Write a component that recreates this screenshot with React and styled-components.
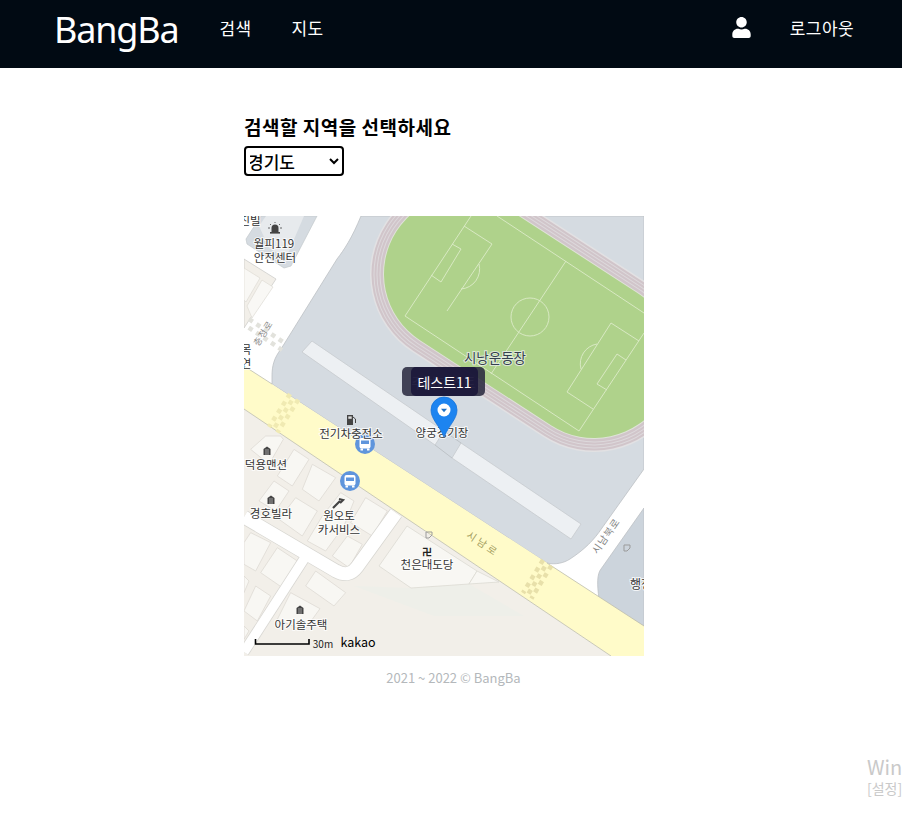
import React from "react";
import styled, { createGlobalStyle } from "styled-components";
import { FaUser } from "react-icons/fa";

const GlobalStyle = createGlobalStyle`
  html, body {
    margin: 0;
    padding: 0;
    background: #fff;
    font-family: "Noto Sans CJK KR", "Noto Sans", sans-serif;
  }
`;

const Page = styled.div`
  min-height: 817px;
  position: relative;
  overflow: hidden;
`;

const Header = styled.header`
  height: 68px;
  background: #010a13;
  color: #fff;
  display: flex;
  align-items: center;
  padding: 0 48px 13px 54px;
  box-sizing: border-box;
`;

const Brand = styled.a`
  font-family: "Noto Sans", sans-serif;
  font-size: 36px;
  line-height: 1;
  letter-spacing: -1.2px;
  margin: 5px 41px 0 0;
`;

const NavLink = styled.a`
  font-size: 17px;
  line-height: 1;
  letter-spacing: 0.4px;
  margin-right: ${(p) => p.$gap || 0}px;
`;

const Spacer = styled.div`
  flex: 1;
`;

const UserIcon = styled(FaUser)`
  width: 19px;
  height: 21px;
  margin-right: 39px;
`;

const Main = styled.main`
  width: 400px;
  margin-left: 244px;
  padding-top: 46px;
`;

const Title = styled.h2`
  margin: 0;
  font-size: 19px;
  line-height: 26px;
  letter-spacing: 0.5px;
  font-weight: 700;
  color: #000;
`;

const RegionSelect = styled.select`
  display: block;
  width: 100px;
  height: 30px;
  margin-top: 6px;
  border: 2px solid #000;
  border-radius: 4px;
  background: #fff;
  color: #000;
  font-family: inherit;
  font-size: 17px;
  font-weight: 500;
  padding: 0 2px 0 0;
  text-indent: -2px;
`;

const MapBox = styled.div`
  position: relative;
  width: 400px;
  height: 440px;
  margin-top: 40px;
  overflow: hidden;
`;

const MapSvg = styled.svg`
  display: block;
  width: 400px;
  height: 440px;
`;

const Bubble = styled.div`
  position: absolute;
  top: 151px;
  height: 29px;
  border-radius: 5px;
  box-sizing: border-box;
  display: flex;
  align-items: center;
  justify-content: center;
  color: #fff;
  font-size: 14px;
  white-space: nowrap;
  overflow: hidden;
`;

const BackBubble = styled(Bubble)`
  left: 158px;
  width: 83px;
  background: rgba(38, 38, 60, 0.85);
  color: rgba(255, 255, 255, 0.75);
`;

const FrontBubble = styled(Bubble)`
  left: 167px;
  width: 67px;
  background: rgba(28, 24, 58, 0.94);
`;

const Pin = styled.svg`
  position: absolute;
  left: 186px;
  top: 180px;
  width: 28px;
  height: 42px;
`;

const Footer = styled.footer`
  width: 902px;
  margin-left: -244px;
  padding: 13px 0 0 5px;
  box-sizing: border-box;
  text-align: center;
  font-size: 13px;
  line-height: 17px;
  color: #b4b8bb;
`;

const Watermark = styled.div`
  position: absolute;
  left: 867px;
  top: 753px;
  color: #c9c9c9;
  white-space: nowrap;
`;

const WatermarkTitle = styled.div`
  font-size: 20px;
  line-height: 27px;
`;

const WatermarkSub = styled.div`
  font-size: 14px;
  line-height: 17px;
`;

const Label = styled.text`
  font-family: "Noto Sans CJK KR", sans-serif;
  font-size: ${(p) => p.$size || 11.5}px;
  font-weight: ${(p) => p.$weight || 400};
  fill: ${(p) => p.$color || "#333"};
  text-anchor: middle;
  paint-order: stroke;
  stroke: ${(p) => p.$halo || "rgba(255,255,255,0.8)"};
  stroke-width: ${(p) => (p.$halo === "none" ? 0 : 2)}px;
`;

// 지도에 쓰는 건물들 (zoom 좌표 기준 / 3)
const buildings = [
  "150,40 195,70 145,150 100,120",
  "205,85 275,125 225,195 175,160",
  "90,135 135,165 95,225 45,195",
  "155,185 220,225 175,300 105,250",
  "290,170 330,195 300,270 245,345 190,315 235,240",
  "365,185 430,225 385,300 320,260",
  "310,300 355,325 315,395 265,360",
  "20,290 80,320 35,405 0,385 0,320",
  "100,335 160,375 115,455 50,410",
  "35,450 80,480 40,555 0,525",
  "215,405 305,470 270,510 185,450",
  "140,470 228,518 180,585 100,550",
  "0,570 15,585 0,610",
  "0,420 15,435 0,470",
  "20,40 65,0 110,0 118,10 75,85",
];

const pitchLines = [
  "M227 0L161 100L335 215L400 117",
  "M253 0L400 97",
  "M322 45L247 158",
  "M220 10L248 28L203 95",
  "M208 28L217 33L197 66L187 59",
  "M367 107L395 125M367 107L323 176L349 193",
  "M373 138L382 144M373 138L353 168L363 174",
  "M235 48A20 20 0 0 1 217 73",
  "M353 128A20 20 0 0 0 337 153",
];

const trackLayers = [
  [186, "#e2e1e3"],
  [183, "#d1c5ca"],
  [179, "#ddd9dc"],
  [177, "#d1c5ca"],
  [173, "#ddd9dc"],
  [171, "#d1c5ca"],
  [167, "#ddd9dc"],
  [165, "#d1c5ca"],
  [160, "#dfe3d8"],
  [158, "#afd28b"],
];

// 횡단보도: 줄마다 점선 시작을 어긋나게 그린다
const Crosswalk = ({ x1, y1, x2, y2, dx, dy, rows, color }) => (
  <g stroke={color} strokeWidth="4.5" strokeDasharray="4.5 4.5">
    {Array.from({ length: rows }, (_, i) => (
      <line
        key={i}
        x1={x1 + dx * i}
        y1={y1 + dy * i}
        x2={x2 + dx * i}
        y2={y2 + dy * i}
        strokeDashoffset={i % 2 ? 4.5 : 0}
      />
    ))}
  </g>
);

const BusStop = ({ x, y }) => (
  <g transform={`translate(${x} ${y})`}>
    <circle r="10" fill="#5f95dc" />
    <rect x="-5.5" y="-6" width="11" height="10.5" rx="2" fill="#fff" />
    <rect x="-4" y="-3.5" width="8" height="3.5" fill="#5f95dc" />
    <rect x="-4.5" y="4.5" width="2.5" height="2" fill="#fff" />
    <rect x="2" y="4.5" width="2.5" height="2" fill="#fff" />
  </g>
);

const HouseIcon = ({ x, y }) => (
  <g transform={`translate(${x} ${y})`} fill="#444">
    <path d="M-3.5 4V-2L0 -4.5L3.5 -2V4Z" />
    <path d="M-2 -1H2M-2 1H2M-2 3H2" stroke="#ddd" strokeWidth="0.6" />
  </g>
);

const SignIcon = ({ x, y }) => (
  <path
    transform={`translate(${x} ${y})`}
    d="M-3 -3H3V0L0 3H-3Z"
    fill="none"
    stroke="#9b9b9b"
    strokeWidth="1"
  />
);

function KakaoMap() {
  return (
    <MapSvg viewBox="0 0 400 440">
      <rect width="400" height="440" fill="#fff" />

      {/* 아래쪽 땅 */}
      <polygon points="0,193 367,440 0,440" fill="#f2efe9" />
      <polygon points="0,43 32,63 0,112" fill="#f2efe9" stroke="#c9c9c5" strokeWidth="0.7" />
      <polygon points="0,52 16,62 2,86 0,84" fill="#f9f8f5" stroke="#dedbd4" strokeWidth="0.7" />
      <polygon points="18,64 29,71 8,102 3,90" fill="#f9f8f5" stroke="#dedbd4" strokeWidth="0.7" />

      {/* 소방서 블록 */}
      <polygon points="2,23 17,0 73,0 47,50 40,52 3,28" fill="#d5dbe1" stroke="#c3c8cc" strokeWidth="0.7" />
      <polygon points="15,10 22,0 60,0 42,42 25,32" fill="#e7eaed" />

      {/* 운동장 주변 회색 블록 */}
      <path
        d="M117 0C108 22 100 34 93 43L37 133C30 142 28 150 28 160V168L303 347C311 349 320 347 326 343C340 334 350 324 358 312L400 253V0Z"
        fill="#d5dbe1"
        stroke="#bcc0c4"
        strokeWidth="0.8"
      />
      <path
        d="M400 292L357 353C353 358 353 368 355 383L400 410Z"
        fill="#ccd4dc"
        stroke="#bcc0c4"
        strokeWidth="0.8"
      />

      {/* 트랙 + 잔디 */}
      {trackLayers.map(([w, c]) => (
        <line
          key={w}
          x1="219"
          y1="58"
          x2="350"
          y2="143"
          stroke={c}
          strokeWidth={w}
          strokeLinecap="round"
        />
      ))}
      <g fill="none" stroke="#dcebc8" strokeWidth="0.9">
        {pitchLines.map((d) => (
          <path key={d} d={d} />
        ))}
        <circle cx="286" cy="101" r="19" />
      </g>

      {/* 긴 건물 */}
      <polygon points="68,125 200,215 191,229 58,136" fill="#edf0f3" stroke="#c6cace" strokeWidth="0.8" />
      <polygon points="217,227 337,308 327,323 208,242" fill="#edf0f3" stroke="#c6cace" strokeWidth="0.8" />
      <path d="M200 215L217 227M191 229L208 242" stroke="#b8bcc0" strokeWidth="0.8" />

      {/* 도로 */}
      <polygon points="0,150 400,410 400,440 367,440 0,193" fill="#fffbc9" />
      <path d="M0 150L28 168M303 347L400 410" stroke="#bdbcae" strokeWidth="0.8" fill="none" />
      <path d="M0 193L367 440" stroke="#bdbcae" strokeWidth="0.8" fill="none" />
      <Crosswalk x1={46} y1={178} x2={25} y2={211} dx={4.2} dy={2.8} rows={3} color="#f0eab2" />
      <Crosswalk x1={299} y1={344} x2={279} y2={377} dx={4.2} dy={2.8} rows={3} color="#e8e0aa" />
      <Crosswalk x1={5} y1={103} x2={42} y2={128} dx={-4} dy={6} rows={2} color="#e2e2dc" />

      {/* 건물 */}
      <g transform="translate(0 220) scale(0.3333)" fill="#f8f7f3" stroke="#dedbd4" strokeWidth="2.4">
        {buildings.map((pts) => (
          <polygon key={pts} points={pts} />
        ))}
      </g>
      <polygon points="110,370 167,372 225,368 280,400 190,400" fill="#eeefe9" />
      <path d="M0 301L92 355Q105 362 113 351L152 297" fill="none" stroke="#d8d7d2" strokeWidth="14.5" />
      <path d="M62 340L0 436" fill="none" stroke="#d8d7d2" strokeWidth="11" />
      <path d="M0 301L92 355Q105 362 113 351L152 297" fill="none" stroke="#fff" strokeWidth="13" />
      <path d="M62 340L0 436" fill="none" stroke="#fff" strokeWidth="9.5" />
      <polygon points="163,310 233,355 225,368 167,372 135,350" fill="#f8f7f3" stroke="#dcdad3" strokeWidth="0.8" />
      <polygon points="233,355 255,366 225,368" fill="#f8f7f3" stroke="#dcdad3" strokeWidth="0.8" />

      {/* 아이콘 */}
      <g transform="translate(31 13)" fill="#444">
        <path d="M-3.5 3V-1A3.5 3.5 0 0 1 3.5 -1V3Z" />
        <rect x="-5" y="3" width="10" height="1.6" />
        <path d="M-7 -1H-5M5 -1H7M-5 -5L-4 -4M5 -5L4 -4M0 -7V-6" stroke="#444" strokeWidth="0.8" />
      </g>
      <HouseIcon x={23} y={235} />
      <HouseIcon x={27} y={284} />
      <HouseIcon x={56} y={394} />
      <g transform="translate(107 204)" fill="#444">
        <path d="M-4 5V-5H2V5Z" />
        <rect x="-2.7" y="-3.6" width="3.4" height="2.4" fill="#ddd" />
        <path d="M2 -3L4.5 -1V3" stroke="#444" fill="none" />
      </g>
      <path d="M89 292L96 285M95 283L99 284L96 287" stroke="#444" strokeWidth="2.2" fill="none" />
      <SignIcon x={185} y={319} />
      <SignIcon x={383} y={332} />
      <BusStop x={121} y={228} />
      <BusStop x={106} y={265} />

      {/* 라벨 */}
      <Label x="6" y="9">진빌</Label>
      <Label x="30" y="32">월피119</Label>
      <Label x="31" y="46">안전센터</Label>
      <Label x="2" y="138">목</Label>
      <Label x="2" y="152">연</Label>
      <Label x="251" y="147" $size={13.5} $color="#36424f" $halo="rgba(235,240,235,0.8)">시낭운동장</Label>
      <Label x="198" y="221">양궁경기장</Label>
      <Label x="107" y="222">전기차충전소</Label>
      <Label x="22" y="253">덕용맨션</Label>
      <Label x="27" y="302">경호빌라</Label>
      <Label x="95" y="304">원오토</Label>
      <Label x="95" y="318">카서비스</Label>
      <Label x="183" y="353">천은대도당</Label>
      <Label x="57" y="413">아기솔주택</Label>
      <Label x="397" y="373" $size={12}>행정</Label>
      <Label x="183" y="340" $size={10} $weight={700} $color="#222" $halo="none">卍</Label>
      <Label transform="translate(22 119) rotate(-58)" $size={9} $color="#8a8a8a" $halo="none" letterSpacing="1">충정로</Label>
      <Label transform="translate(237 331) rotate(34)" $size={10} $color="#a39c5c" $halo="none" letterSpacing="3">시남로</Label>
      <Label transform="translate(365 322) rotate(-55)" $size={10} $color="#858585" $halo="rgba(255,255,255,0.9)" letterSpacing="1">시남북로</Label>

      {/* 축척 + 로고 */}
      <path d="M11.5 423V428H65V423" fill="none" stroke="#000" strokeWidth="1.6" />
      <Label x="79" y="432" $size={10} $color="#222" $halo="none">30m</Label>
      <Label x="114" y="431" $size={12.5} $color="#000" $halo="none">kakao</Label>
    </MapSvg>
  );
}

export default function App() {
  return (
    <>
      <GlobalStyle />
      <Page>
        <Header>
          <Brand>BangBa</Brand>
          <NavLink $gap={40}>검색</NavLink>
          <NavLink>지도</NavLink>
          <Spacer />
          <UserIcon />
          <NavLink>로그아웃</NavLink>
        </Header>
        <Main>
          <Title>검색할 지역을 선택하세요</Title>
          <RegionSelect defaultValue="경기도">
            <option>경기도</option>
            <option>서울특별시</option>
            <option>인천광역시</option>
          </RegionSelect>
          <MapBox>
            <KakaoMap />
            <BackBubble>주차테스트</BackBubble>
            <FrontBubble>테스트11</FrontBubble>
            <Pin viewBox="0 0 28 42">
              <path
                d="M14 1A13 13 0 0 0 1 14C1 23 9 29 14 41C19 29 27 23 27 14A13 13 0 0 0 14 1Z"
                fill="#1d84f0"
                stroke="#1673d8"
                strokeWidth="0.8"
              />
              <circle cx="14" cy="14" r="6.5" fill="#fff" />
              <path d="M11 12.8H17L14 16.2Z" fill="#1d6fc4" />
            </Pin>
          </MapBox>
          <Footer>2021 ~ 2022 © BangBa</Footer>
        </Main>
        <Watermark>
          <WatermarkTitle>Windows 정품 인증</WatermarkTitle>
          <WatermarkSub>[설정]으로 이동하여 Windows를 정품 인증합니다.</WatermarkSub>
        </Watermark>
      </Page>
    </>
  );
}
